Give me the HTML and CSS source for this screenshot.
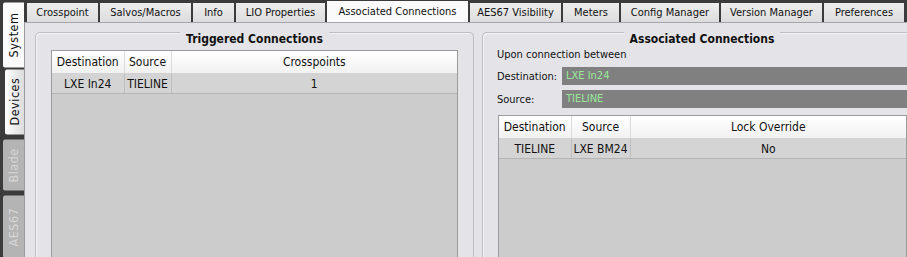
FILE: index.html
```html
<!DOCTYPE html>
<html lang="en">
<head>
  <meta charset="UTF-8">
  <title>Associated Connections</title>
  <link rel="stylesheet" href="styles.css">
</head>
<body>
  <div class="side-tabs">
    <div class="vtab active">System</div>
    <div class="vtab devices">Devices</div>
    <div class="vtab disabled blade">Blade</div>
    <div class="vtab disabled aes">AES67</div>
  </div>

  <div class="main">
    <div class="tabbar">
      <div class="tab w-cross">Crosspoint</div>
      <div class="tab w-salvos">Salvos/Macros</div>
      <div class="tab w-info">Info</div>
      <div class="tab w-lio">LIO Properties</div>
      <div class="tab selected w-assoc">Associated Connections</div>
      <div class="tab w-aes">AES67 Visibility</div>
      <div class="tab w-meters">Meters</div>
      <div class="tab w-config">Config Manager</div>
      <div class="tab w-version">Version Manager</div>
      <div class="tab w-prefs">Preferences</div>
    </div>

    <div class="panel">
      <div class="group group-left">
        <div class="group-title">Triggered Connections</div>
        <div class="grid">
          <table>
            <colgroup>
              <col style="width: 72px">
              <col style="width: 47px">
              <col>
            </colgroup>
            <thead>
              <tr><th>Destination</th><th>Source</th><th>Crosspoints</th></tr>
            </thead>
            <tbody>
              <tr><td>LXE In24</td><td>TIELINE</td><td>1</td></tr>
            </tbody>
          </table>
        </div>
      </div>

      <div class="group group-right">
        <div class="group-title">Associated Connections</div>
        <div class="intro">Upon connection between</div>
        <div class="field-row">
          <span class="field-label">Destination:</span>
          <span class="field">LXE In24</span>
        </div>
        <div class="field-row">
          <span class="field-label">Source:</span>
          <span class="field">TIELINE</span>
        </div>
        <div class="grid grid-right">
          <table>
            <colgroup>
              <col style="width: 72px">
              <col style="width: 59px">
              <col>
            </colgroup>
            <thead>
              <tr><th>Destination</th><th>Source</th><th>Lock Override</th></tr>
            </thead>
            <tbody>
              <tr><td>TIELINE</td><td>LXE BM24</td><td>No</td></tr>
            </tbody>
          </table>
        </div>
      </div>
    </div>
  </div>
</body>
</html>
```

FILE: styles.css
```css
body {
  margin: 0;
  height: 257px;
  overflow: hidden;
  display: flex;
  background-color: #3b3b3b;
  font-family: "DejaVu Sans", "Liberation Sans", sans-serif;
  font-stretch: condensed;
  font-size: 11px;
  color: #111;
}

/* left vertical tabs */
.side-tabs {
  width: 24px;
  flex: none;
  display: flex;
  flex-direction: column;
  align-items: flex-end;
  padding-top: 2px;
}
.vtab {
  writing-mode: vertical-rl;
  transform: rotate(180deg);
  display: flex;
  align-items: center;
  justify-content: center;
  width: 21px;
  height: 66px;
  font-size: 12.5px;
  letter-spacing: 0.5px;
  border-radius: 0 2px 2px 0;
  box-sizing: border-box;
}
.vtab.active {
  background-color: #fbfbfb;
}
.vtab.devices {
  width: 19px;
  margin-top: 2px;
  background: linear-gradient(to left, #ffffff, #dcdcdc);
}
.vtab.disabled {
  background-color: #b4b4b4;
  color: #d6d6d6;
  margin-top: 5px;
}
.vtab.blade {
  height: 51px;
}
.vtab.aes {
  height: 62px;
}

/* main area */
.main {
  flex: 1;
  display: flex;
  flex-direction: column;
  min-width: 0;
}
.tabbar {
  height: 22px;
  flex: none;
  display: flex;
  align-items: flex-end;
  gap: 2px;
  padding-left: 3px;
  box-sizing: border-box;
}
.tab {
  height: 19px;
  line-height: 19px;
  text-align: center;
  white-space: nowrap;
  background: linear-gradient(#eeeeee, #dcdcdc);
  box-sizing: border-box;
  flex: none;
}
.tab.selected {
  height: 21px;
  line-height: 22px;
  background: #fafafa;
}
.w-cross { width: 71px; }
.w-salvos { width: 91px; }
.w-info { width: 41px; }
.w-lio { width: 89px; }
.w-assoc { width: 141px; }
.w-aes { width: 91px; }
.w-meters { width: 56px; }
.w-config { width: 98px; }
.w-version { width: 101px; }
.w-prefs { width: 80px; }

.panel {
  flex: 1;
  display: flex;
  gap: 8px;
  padding: 9px 0 0 10px;
  background-color: #e4e4e8;
  border-top: 1px solid #a6a6aa;
  border-left: 1px solid #9c9ca0;
  min-height: 0;
}

.group {
  flex: none;
  display: flex;
  flex-direction: column;
  border: 1px solid #bdbdc2;
  border-bottom: none;
  border-radius: 5px 5px 0 0;
  box-shadow: inset 1px 1px 0 #f4f4f6;
  padding: 0 15px;
}
.group-left {
  width: 407px;
}
.group-right {
  width: 410px;
  padding-left: 14px;
}
.group-title {
  align-self: center;
  margin-top: -1px;
  padding: 0 6px;
  line-height: 15px;
  font-size: 12px;
  font-weight: bold;
  background-color: #e4e4e8;
}

.intro {
  margin-top: 1px;
  line-height: 14px;
}
.field-row {
  display: flex;
  align-items: center;
  margin-top: 5px;
}
.field-label {
  width: 65px;
  flex: none;
}
.field {
  flex: 1;
  height: 18px;
  line-height: 18px;
  padding-left: 4px;
  background-color: #808080;
  color: #98e898;
}

.grid {
  flex: 1;
  margin-top: 3px;
  background-color: #cccccc;
  border: 1px solid #9c9c9c;
  border-bottom: none;
}
.grid-right {
  margin-top: 7px;
  margin-left: 1px;
}
table {
  width: 100%;
  border-collapse: collapse;
  table-layout: fixed;
}
th, td {
  padding: 0;
  text-align: center;
  font-weight: normal;
  font-size: 12px;
  white-space: nowrap;
  overflow: hidden;
}
th {
  height: 22px;
  background: linear-gradient(#ffffff, #f1f1f1);
  border-right: 1px solid #dadada;
  border-bottom: 1px solid #d2d2d2;
}
td {
  height: 19px;
  background-color: #d4d4d4;
  border-right: 1px solid #bebebe;
  border-bottom: 1px solid #b4b4b4;
}
th:last-child, td:last-child {
  border-right: none;
}
```
